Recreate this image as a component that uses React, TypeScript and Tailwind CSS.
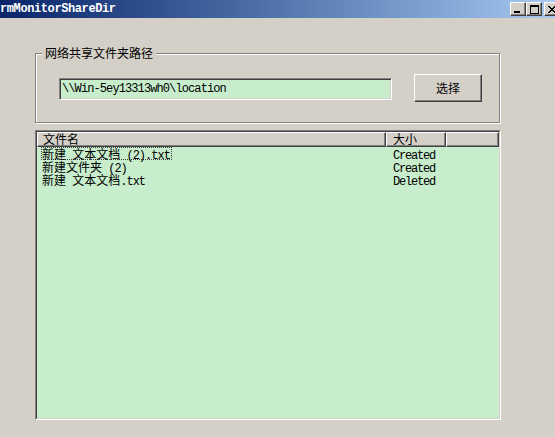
import React from "react";

function Mixed({ text }: { text: string }) {
  const parts = text.split(/([\x00-\x7f]+)/).filter((p) => p.length > 0);
  return (
    <>
      {parts.map((p, i) =>
        /^[\x00-\x7f]+$/.test(p) ? (
          <span key={i} className="font-['Liberation_Mono',monospace] tracking-[-1px] whitespace-pre">
            {p}
          </span>
        ) : (
          <span key={i} className="font-['Noto_Sans_CJK_SC',sans-serif]">
            {p}
          </span>
        )
      )}
    </>
  );
}

const raised =
  "border border-t-white border-l-white border-r-[#404040] border-b-[#404040] shadow-[inset_-1px_-1px_0_#808080] bg-[#d4d0c8]";

function TitleButton({ children }: { children: React.ReactNode }) {
  return (
    <div className={`w-[16px] h-[14px] flex items-center justify-center ${raised}`}>{children}</div>
  );
}

export default function App() {
  const rows = [
    { name: "新建 文本文档 (2).txt", status: "Created", focus: true },
    { name: "新建文件夹 (2)", status: "Created", focus: false },
    { name: "新建 文本文档.txt", status: "Deleted", focus: false },
  ];
  return (
    <div className="w-[555px] h-[437px] bg-[#d4d0c8] flex flex-col overflow-hidden text-black">
      {/* Title bar */}
      <div className="h-[18px] flex items-center bg-gradient-to-r from-[#0a246a] to-[#a6caf0] shrink-0">
        <span className="text-white font-bold text-[12px] leading-[14px] font-['Liberation_Mono',monospace] tracking-[-0.4px]">
          rmMonitorShareDir
        </span>
        <div className="ml-auto flex items-center mr-[-5px]">
          <TitleButton>
            <div className="w-[6px] h-[2px] bg-black mt-[6px] ml-[-2px]" />
          </TitleButton>
          <TitleButton>
            <div className="w-[9px] h-[9px] border border-black border-t-2" />
          </TitleButton>
          <div className="w-[2px]" />
          <TitleButton>
            <svg width="8" height="7" viewBox="0 0 8 7">
              <path d="M0 0 L7 7 M1 0 L8 7 M7 0 L0 7 M8 0 L1 7" stroke="black" strokeWidth="1" />
            </svg>
          </TitleButton>
        </div>
      </div>

      {/* Group box */}
      <div className="pl-[35px] pt-[35px]">
        <div className="relative w-[465px] h-[70px] border border-[#808080] shadow-[inset_1px_1px_0_#fff,1px_1px_0_#fff]">
          <span className="absolute left-[6px] top-[-8px] px-[3px] bg-[#d4d0c8] text-[12px] leading-[13px] font-['Noto_Sans_CJK_SC',sans-serif]">
            网络共享文件夹路径
          </span>
          <div className="flex items-start pl-[23px]">
            <div className="mt-[24px] w-[333px] h-[22px] bg-[#c7edcc] border border-t-[#808080] border-l-[#808080] border-r-white border-b-white shadow-[inset_1px_1px_0_#404040,inset_-1px_-1px_0_#d4d0c8] flex items-center pl-[2px] text-[12px] leading-[14px]">
              <span className="font-['Liberation_Mono',monospace] tracking-[-0.9px] whitespace-pre">
                {"\\\\Win-5ey13313wh0\\location"}
              </span>
            </div>
            <div
              className={`mt-[20px] ml-[22px] w-[68px] h-[28px] flex items-center justify-center text-[12px] leading-[14px] font-['Noto_Sans_CJK_SC',sans-serif] ${raised}`}
            >
              选择
            </div>
          </div>
        </div>
      </div>

      {/* List view */}
      <div className="pl-[35px] pt-[7px]">
        <div className="w-[466px] h-[290px] border border-t-[#808080] border-l-[#808080] border-r-white border-b-white">
          <div className="w-full h-full border border-t-[#404040] border-l-[#404040] border-r-[#d4d0c8] border-b-[#d4d0c8] bg-[#c7edcc] flex flex-col">
            <div className="flex h-[15px] shrink-0 text-[12px] leading-[11px] font-['Noto_Sans_CJK_SC',sans-serif]">
              <div className={`w-[349px] h-full pl-[5px] whitespace-nowrap ${raised}`}>文件名</div>
              <div className={`w-[60px] h-full pl-[6px] whitespace-nowrap ${raised}`}>大小</div>
              <div className={`flex-1 h-full ${raised}`} />
            </div>
            <div className="flex flex-col text-[12px] leading-[11px] font-['Noto_Sans_CJK_SC',sans-serif]">
              {rows.map((r, i) => (
                <div key={i} className="flex h-[13px] whitespace-nowrap">
                  <div className="w-[349px] pl-[4px] h-[13px]">
                    <span
                      className={`inline-block align-top h-[13px] border border-dotted ${
                        r.focus ? "border-[#404040]" : "border-transparent"
                      } pr-[1px]`}
                    >
                      <Mixed text={r.name} />
                    </span>
                  </div>
                  <div className="pl-[7px] pt-[1px] h-[13px]">
                    <span className="font-['Liberation_Mono',monospace] tracking-[-1.2px]">{r.status}</span>
                  </div>
                </div>
              ))}
            </div>
          </div>
        </div>
      </div>
    </div>
  );
}
